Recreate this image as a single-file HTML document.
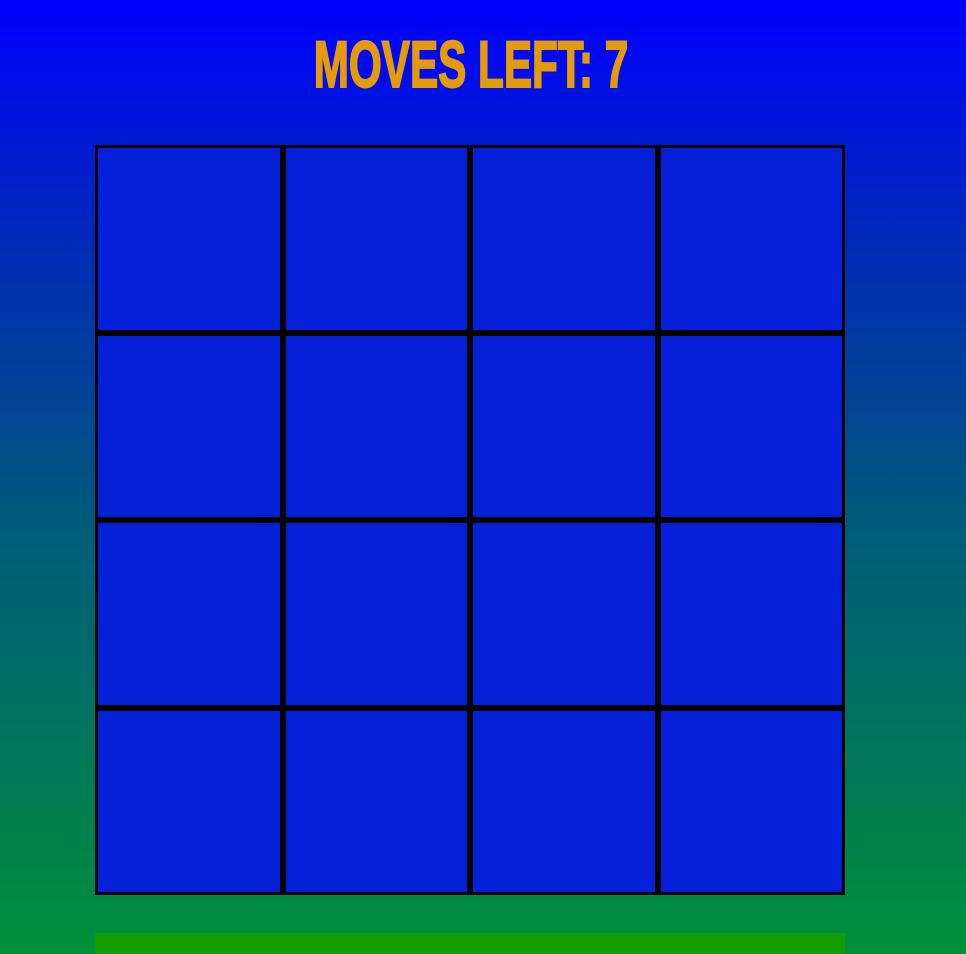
<!DOCTYPE html>
<html><head><style>
html,body{margin:0;padding:0;}
body{width:966px;height:954px;overflow:hidden;position:relative;
background:linear-gradient(to bottom,#0000ff 0px,#0018d8 130px,#0030b0 280px,#005a7a 520px,#006a6a 650px,#00903a 954px);}
h1{position:absolute;left:-12px;top:26px;width:966px;margin:0;text-align:center;
font-family:"Liberation Sans Narrow","Liberation Sans",sans-serif;font-weight:bold;font-size:66px;line-height:76px;color:#e39a0c;letter-spacing:0px;transform:scaleX(0.64);-webkit-text-stroke:2px #e39a0c;}
.grid{position:absolute;left:95px;top:145px;width:750px;height:750px;display:grid;grid-template-columns:repeat(4,1fr);grid-template-rows:repeat(4,1fr);}
.grid div{box-sizing:border-box;border:3px solid #000;background:#0520d9;}
.bar{position:absolute;left:95px;top:933px;width:750px;height:21px;background:#149c06;}
</style></head><body>
<h1>MOVES LEFT: 7</h1>
<div class="grid">
<div></div><div></div><div></div><div></div>
<div></div><div></div><div></div><div></div>
<div></div><div></div><div></div><div></div>
<div></div><div></div><div></div><div></div>
</div>
<div class="bar"></div>
</body></html>
